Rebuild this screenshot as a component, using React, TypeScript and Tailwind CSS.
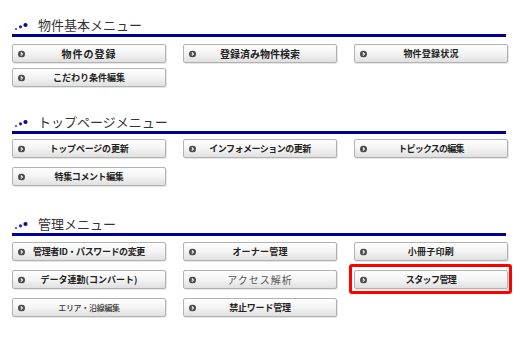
import React from 'react';

interface MenuButton {
  label: string;
  text: string;
  highlight?: boolean;
}

interface MenuSection {
  title: string;
  sectionClass: string;
  gridClass: string;
  buttons: MenuButton[];
}

const sections: MenuSection[] = [
  {
    title: '物件基本メニュー',
    sectionClass: 'mt-[17px]',
    gridClass: 'mt-[7px] gap-y-[5px]',
    buttons: [
      { label: '物件の登録', text: 'text-[10px] font-bold tracking-[1px] text-[#222]' },
      { label: '登録済み物件検索', text: 'text-[10px] font-bold text-[#222]' },
      { label: '物件登録状況', text: 'text-[9px] font-bold tracking-[0.2px] text-[#222]' },
      { label: 'こだわり条件編集', text: 'text-[9px] font-bold text-[#222]' },
    ],
  },
  {
    title: 'トップページメニュー',
    sectionClass: 'mt-[28px]',
    gridClass: 'mt-[5px] gap-y-[9px]',
    buttons: [
      { label: 'トップページの更新', text: 'text-[9px] font-bold tracking-[-0.2px] text-[#222]' },
      { label: 'インフォメーションの更新', text: 'text-[9px] font-bold tracking-[-0.5px] text-[#222]' },
      { label: 'トピックスの編集', text: 'text-[9px] font-bold tracking-[-0.8px] text-[#222]' },
      { label: '特集コメント編集', text: 'text-[9px] font-bold tracking-[-0.4px] text-[#222]' },
    ],
  },
  {
    title: '管理メニュー',
    sectionClass: 'mt-[31px]',
    gridClass: 'mt-[6px] gap-y-[9px]',
    buttons: [
      { label: '管理者ID・パスワードの変更', text: 'text-[9px] font-bold tracking-[-0.4px] text-[#222]' },
      { label: 'オーナー管理', text: 'text-[9px] font-bold tracking-[0.2px] text-[#222]' },
      { label: '小冊子印刷', text: 'text-[9px] font-bold tracking-[0.25px] text-[#222]' },
      { label: 'データ連動(コンバート)', text: 'text-[9px] font-bold text-[#222]' },
      { label: 'アクセス解析', text: 'text-[10px] font-normal tracking-[1px] text-[#555]' },
      { label: 'スタッフ管理', text: 'text-[9px] font-bold tracking-[-0.6px] text-[#222]', highlight: true },
      { label: 'エリア・沿線編集', text: 'text-[8px] font-medium tracking-[-0.3px] text-[#333]' },
      { label: '禁止ワード管理', text: 'text-[9px] font-bold tracking-[-0.2px] text-[#222]' },
    ],
  },
];

function Dots() {
  return (
    <svg width="14" height="9" viewBox="0 0 14 9" className="mt-[3px]">
      <circle cx="2" cy="7" r="1.1" fill="#3344cc" />
      <circle cx="6.5" cy="4.8" r="1.6" fill="#1a22b0" />
      <circle cx="11.5" cy="3" r="2.1" fill="#0a0a99" />
    </svg>
  );
}

function ArrowIcon() {
  return (
    <svg width="7" height="7" viewBox="0 0 7 7" className="absolute left-[5px] top-1/2 -translate-y-1/2">
      <circle cx="3.5" cy="3.5" r="3.5" fill="#4d4d4d" />
      <path d="M2.8 2 L4.4 3.5 L2.8 5" stroke="#fff" strokeWidth="1.1" fill="none" />
    </svg>
  );
}

function Button({ button }: { button: MenuButton }) {
  return (
    <div className="relative">
      <div className="relative flex h-[19px] w-[154px] items-center justify-center rounded-[2px] border border-[#b2b2b2] bg-linear-to-b from-[#fefefe] via-[#f4f4f4] to-[#e0e0e0] shadow-[1px_1px_0_#e6e6e6]">
        <ArrowIcon />
        <span className={`leading-none whitespace-nowrap ${button.text}`}>{button.label}</span>
      </div>
      {button.highlight && (
        <span className="pointer-events-none absolute -top-[6px] -bottom-[5px] -left-[5px] -right-[4px] rounded-[3px] border-[3px] border-[#ff0000]" />
      )}
    </div>
  );
}

export default function App() {
  return (
    <div
      className="h-[350px] w-[520px] bg-white pl-[12px]"
      style={{ fontFamily: '"Noto Sans CJK JP", "Noto Sans", sans-serif' }}
    >
      <div className="pt-px">
        {sections.map((section) => (
          <section key={section.title} className={section.sectionClass}>
            <div className="flex h-[19px] w-[494px] items-end border-b-[3px] border-[#000099] pb-[3px]">
              <div className="flex items-center pl-[2px]">
                <Dots />
                <h2 className="ml-[10px] text-[13px] leading-none font-normal text-[#333]">{section.title}</h2>
              </div>
            </div>
            <div className={`grid grid-cols-[154px_154px_154px] gap-x-[17px] ${section.gridClass}`}>
              {section.buttons.map((button) => (
                <Button key={button.label} button={button} />
              ))}
            </div>
          </section>
        ))}
      </div>
    </div>
  );
}
